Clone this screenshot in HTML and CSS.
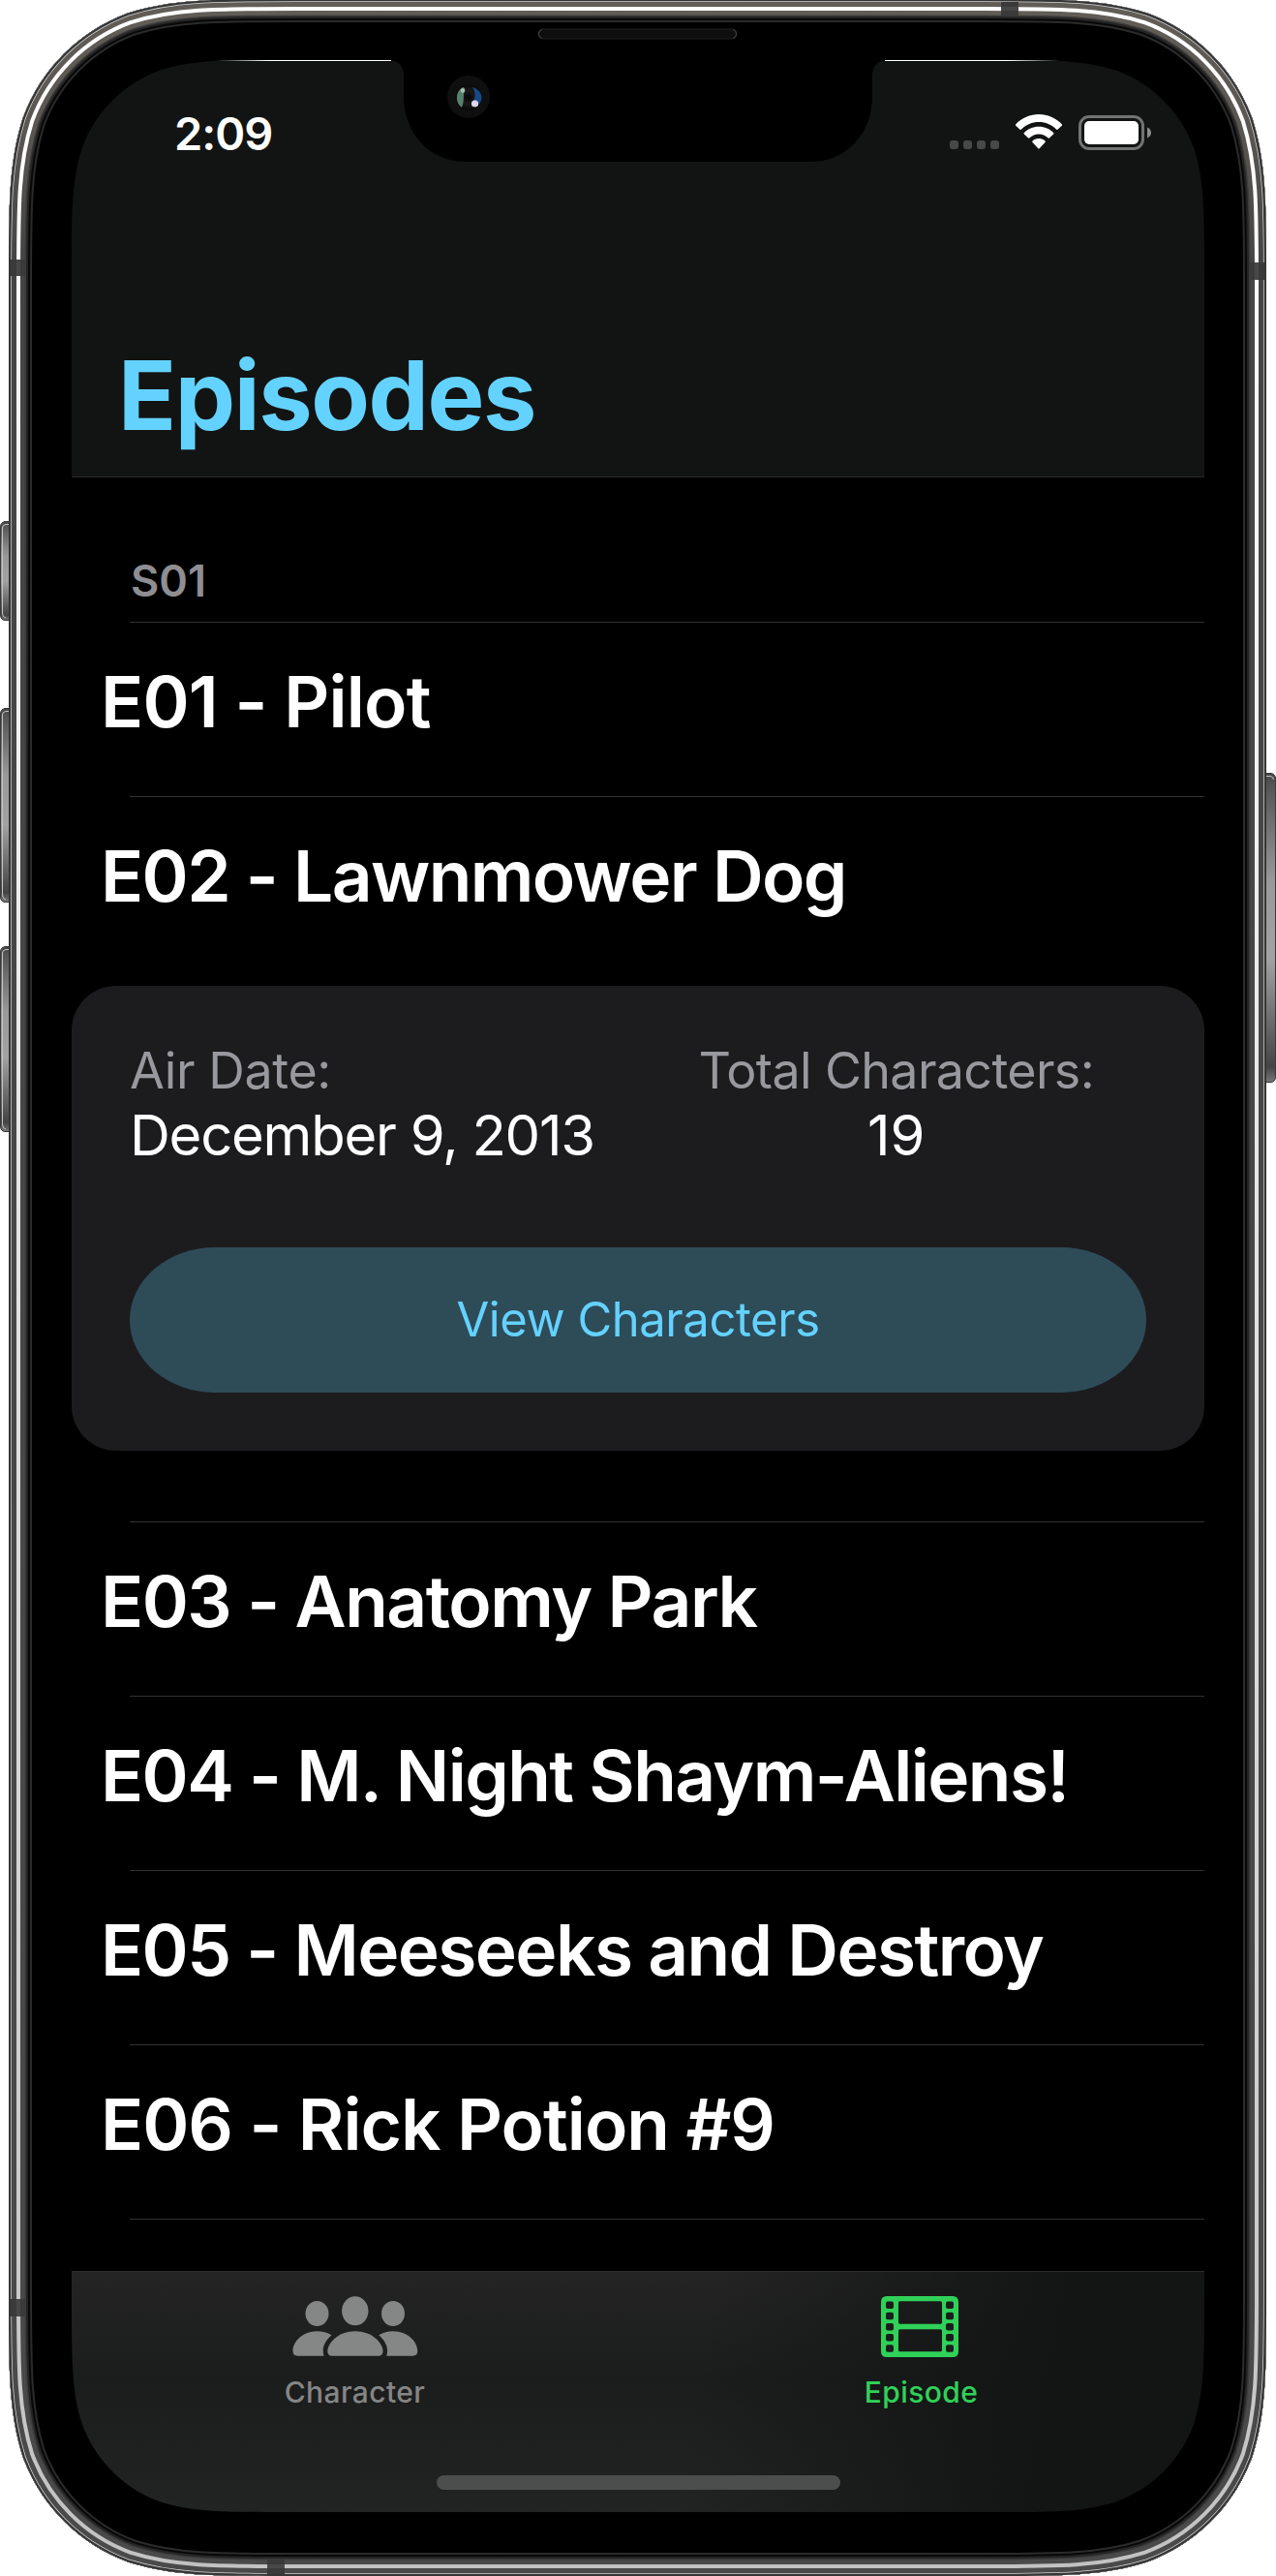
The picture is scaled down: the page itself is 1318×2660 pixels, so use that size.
FILE: index.html
```html
<!DOCTYPE html>
<html lang="en">
<head>
<meta charset="utf-8">
<title>Episodes</title>
<link rel="stylesheet" href="styles.css">
</head>
<body>
<div class="device">
  <main class="screen">
    <header class="nav">
      <div class="status">
        <span class="time">2:09</span>
        <div class="indicators">
          <span class="dots"><i></i><i></i><i></i><i></i></span>
          <svg class="wifi" viewBox="0 0 48 36" width="48" height="36" fill="#fff">
            <path d="M24 0C33 0 41.500 3.600 48 10.500Q48.300 11.200 47.800 11.800L43.500 15.800Q42.800 16.300 42 15.600C37 10.600 31 8 24 8S11 10.600 6 15.600Q5.200 16.300 4.500 15.800L.2 11.800Q-.3 11.200 0 10.500C6.500 3.600 15 0 24 0Z"/>
            <path d="M24 12.700C30 12.700 35.300 15 39.300 19.200Q39.700 19.900 39.200 20.500L34.900 24.500Q34.100 25 33.400 24.300C30.800 21.900 27.700 20.500 24 20.500S17.200 21.900 14.600 24.300Q13.900 25 13.100 24.500L8.800 20.500Q8.300 19.900 8.700 19.200C12.700 15 18 12.700 24 12.700Z"/>
            <path d="M24 25C26.700 25 29 26 30.700 27.800Q31 28.500 30.500 29.100L24.700 35.200Q24 35.800 23.300 35.200L17.500 29.100Q17 28.500 17.300 27.800C19 26 21.300 25 24 25Z"/>
          </svg>
          <svg class="battery" viewBox="0 0 76 36" width="76" height="36">
            <rect x="1.500" y="1.500" width="65" height="33" rx="9.500" fill="none" stroke="#717272" stroke-width="3"/>
            <rect x="6" y="6" width="56" height="24" rx="5" fill="#fff"/>
            <path d="M71 12.500C76.300 14.500 76.300 21.500 71 23.500Z" fill="#8a8b8a"/>
          </svg>
        </div>
      </div>
      <h1 class="title">Episodes</h1>
    </header>

    <section class="list">
      <h2 class="season">S01</h2>
      <div class="row r1">E01 - Pilot</div>
      <div class="row r2">E02 - Lawnmower Dog</div>
      <article class="card">
        <div class="facts">
          <div class="fact"><span class="label l1">Air Date:</span><span class="value v1">December 9, 2013</span></div>
          <div class="fact center"><span class="label l2">Total Characters:</span><span class="value">19</span></div>
        </div>
        <button class="view">View Characters</button>
      </article>
      <div class="row r3">E03 - Anatomy Park</div>
      <div class="row r4">E04 - M. Night Shaym-Aliens!</div>
      <div class="row r5">E05 - Meeseeks and Destroy</div>
      <div class="row r6">E06 - Rick Potion #9</div>
      <div class="row"></div>
    </section>

    <nav class="tabs">
      <div class="tab">
        <svg viewBox="0 0 130 63" width="130" height="63" fill="#858686">
          <ellipse cx="25.500" cy="18" rx="12" ry="13"/>
          <ellipse cx="104" cy="18" rx="12" ry="13"/>
          <ellipse cx="64.800" cy="15.300" rx="13.700" ry="15"/>
          <path d="M25.500 36.300C31 36.300 36 37.500 40.500 40.300C35.500 44.500 32 50 31.700 56Q31.600 59 32.600 61.700H5.500Q.5 61.700.5 56.500C.5 48 9.500 36.300 25.500 36.300Z"/>
          <path d="M104 36.300C98.500 36.300 94 37.500 89.300 40.300C94.300 44.500 97.800 50 98.100 56Q98.200 59 97.200 61.700H124.300Q129.300 61.700 129.300 56.500C129.300 48 120.300 36.300 104 36.300Z"/>
          <path d="M64.800 36.300C82.500 36.300 93.500 48.500 93.500 57Q93.500 61.700 88.500 61.700H41.300Q36.300 61.700 36.300 57C36.300 48.500 47.500 36.300 64.800 36.300Z"/>
        </svg>
        <span>Character</span>
      </div>
      <div class="tab active">
        <svg class="film" viewBox="0 0 80 63" width="80" height="63">
          <path fill="#30d158" fill-rule="evenodd" d="M6 0H74Q80 0 80 6V57Q80 63 74 63H6Q0 63 0 57V6Q0 0 6 0ZM19.500 5.300Q18 5.300 18 7V27Q18 28.700 19.500 28.700H61.500Q63 28.700 63 27V7Q63 5.300 61.500 5.300ZM19.500 34.300Q18 34.300 18 36V56Q18 57.300 19.500 57.300H61.500Q63 57.300 63 56V36Q63 34.300 61.500 34.300Z"/>
          <g fill="#1b1d1c">
            <rect x="5" y="5.500" width="8" height="7.500" rx="2"/><rect x="5" y="16.700" width="8" height="7.500" rx="2"/><rect x="5" y="27.900" width="8" height="7.500" rx="2"/><rect x="5" y="39" width="8" height="7.500" rx="2"/><rect x="5" y="50.200" width="8" height="7.500" rx="2"/>
            <rect x="67" y="5.500" width="8" height="7.500" rx="2"/><rect x="67" y="16.700" width="8" height="7.500" rx="2"/><rect x="67" y="27.900" width="8" height="7.500" rx="2"/><rect x="67" y="39" width="8" height="7.500" rx="2"/><rect x="67" y="50.200" width="8" height="7.500" rx="2"/>
          </g>
        </svg>
        <span>Episode</span>
      </div>
      <div class="home"></div>
    </nav>
  </main>

  <svg class="frame" viewBox="0 0 1318 2660" width="1318" height="2660">
    <defs>
      <path id="body" d="M307.100-1C221.300-1 178.300-1 132.100 13.600C81.700 32 42 71.700 23.600 122.100C9 168.300 9 211.300 9 297.100V2361.900C9 2447.700 9 2490.700 23.600 2536.900C42 2587.300 81.700 2627 132.100 2645.400C178.300 2660 221.300 2660 307.100 2660H1009.900C1095.700 2660 1138.700 2660 1184.900 2645.400C1235.300 2627 1275 2587.300 1293.400 2536.900C1308 2490.700 1308 2447.700 1308 2361.900V297.100C1308 211.300 1308 168.300 1293.400 122.100C1275 71.700 1235.300 32 1184.900 13.600C1138.700-1 1095.700-1 1009.900-1Z"/>
      <clipPath id="inside"><use href="#body"/></clipPath>
      <linearGradient id="metal" gradientUnits="userSpaceOnUse" x1="0" y1="0" x2="0" y2="2660">
        <stop offset="0" stop-color="#625d57"/><stop offset=".05" stop-color="#5a5651"/><stop offset=".1" stop-color="#454545"/><stop offset="1" stop-color="#4a4a4a"/>
      </linearGradient>
      <linearGradient id="shine" gradientUnits="userSpaceOnUse" x1="0" y1="0" x2="0" y2="2660">
        <stop offset="0" stop-color="#fff"/><stop offset=".3" stop-color="#f0f0f0"/><stop offset=".6" stop-color="#dcdcdc"/><stop offset="1" stop-color="#c2c2c2"/>
      </linearGradient>
      <linearGradient id="button" x1="0" y1="0" x2="0" y2="1">
        <stop offset="0" stop-color="#444"/><stop offset=".04" stop-color="#555"/><stop offset=".35" stop-color="#999"/><stop offset=".6" stop-color="#a2a2a2"/><stop offset=".95" stop-color="#444"/><stop offset="1" stop-color="#777"/>
      </linearGradient>
      <radialGradient id="iris"><stop offset="0" stop-color="#050505"/><stop offset=".5" stop-color="#1b1818"/><stop offset="1" stop-color="#080808"/></radialGradient>
      <linearGradient id="edgeL"><stop offset="0" stop-color="#fff" stop-opacity="0"/><stop offset=".3" stop-color="#fff"/></linearGradient>
      <linearGradient id="edgeR"><stop offset=".7" stop-color="#fff"/><stop offset="1" stop-color="#fff" stop-opacity="0"/></linearGradient>
    </defs>

    <g fill="url(#button)" stroke="#3a3a3a" stroke-width="1">
      <path d="M10 538.500H5Q.5 539.500.5 544V635Q.5 640 5 640.500H10Z"/>
      <path d="M10 731.500H5Q.5 732.500.5 737V926Q.5 931 5 931.500H10Z"/>
      <path d="M10 977.500H5Q.5 978.500.5 983V1163Q.5 1168 5 1168.500H10Z"/>
      <path d="M1307 798.500H1313Q1317.500 799.500 1317.500 804V1112Q1317.500 1117 1313 1117.500H1307Z"/>
    </g>
    <g fill="none" stroke="#c4c4c4" stroke-width="1">
      <path d="M9 541.500H6Q2.500 542 2.500 545V633Q2.500 637.500 6 638"/>
      <path d="M9 734.500H6Q2.500 735 2.500 738V924Q2.500 928.500 6 929"/>
      <path d="M9 980.500H6Q2.500 981 2.500 984V1161Q2.500 1165.500 6 1166"/>
      <path d="M1308 801.500H1312Q1315.500 802 1315.500 805"/>
    </g>

    <path fill-rule="evenodd" d="M307.100-1C221.300-1 178.300-1 132.100 13.600C81.700 32 42 71.700 23.600 122.100C9 168.300 9 211.300 9 297.100V2361.900C9 2447.700 9 2490.700 23.600 2536.900C42 2587.300 81.700 2627 132.100 2645.400C178.300 2660 221.300 2660 307.100 2660H1009.900C1095.700 2660 1138.700 2660 1184.900 2645.400C1235.300 2627 1275 2587.300 1293.400 2536.900C1308 2490.700 1308 2447.700 1308 2361.900V297.100C1308 211.300 1308 168.300 1293.400 122.100C1275 71.700 1235.300 32 1184.900 13.600C1138.700-1 1095.700-1 1009.900-1Z
      M294.100 62C230.700 62 199 62 164.900 72.800C127.700 86.300 98.300 115.700 84.800 152.900C74 187 74 218.700 74 282.100V2373.900C74 2437.300 74 2469 84.800 2503.100C98.300 2540.300 127.700 2569.700 164.900 2583.200C199 2594 230.700 2594 294.100 2594H1023.900C1087.300 2594 1119 2594 1153.100 2583.200C1190.300 2569.700 1219.700 2540.300 1233.200 2503.100C1244 2469 1244 2437.300 1244 2373.900V282.100C1244 218.700 1244 187 1233.200 152.900C1219.700 115.700 1190.300 86.300 1153.100 72.800C1119 62 1087.300 62 1023.900 62Z"/>
    <g clip-path="url(#inside)" fill="none">
      <use href="#body" stroke="#2b2b2b" stroke-width="48"/>
      <use href="#body" stroke="#080808" stroke-width="44"/>
      <use href="#body" stroke="#242424" stroke-width="40"/>
      <use href="#body" stroke="#3c3b3a" stroke-width="36"/>
      <use href="#body" stroke="url(#metal)" stroke-width="33"/>
      <use href="#body" stroke="url(#shine)" stroke-width="24"/>
      <use href="#body" stroke="url(#metal)" stroke-width="16"/>
      <use href="#body" stroke="#d4d6d6" stroke-width="6"/>
      <use href="#body" stroke="#363636" stroke-width="4.500"/>
    </g>
    <g fill="#3a3a3a">
      <path d="M11 268H27V285H11ZM1290 271H1306V289H1290ZM1034 2H1052V17H1034ZM11 2374H27V2392H11ZM276 2642H294V2658H276Z"/>
      <path fill="#484848" d="M17 268H21V285H17ZM1296 271H1300V289H1296ZM1034 7H1052V11H1034ZM17 2374H21V2392H17ZM276 2648H294V2652H276Z"/>
    </g>

    <path d="M403 62Q417 64 417 78V100C417 137 443 167 481 167H837C875 167 901 137 901 100V78Q901 64 915 62Z"/>
    <rect x="222" y="62" width="182" height="1" fill="url(#edgeL)"/>
    <rect x="914" y="62" width="182" height="1" fill="url(#edgeR)"/>
    <rect x="556" y="30" width="205" height="10" rx="5" fill="#0e0e0e" stroke="#202020"/>
    <path d="M560 30.500Q556.500 31 556.500 35T560 39.500M757 30.500Q760.500 31 760.500 35T757 39.500" fill="none" stroke="#444"/>
    <circle cx="484" cy="100" r="22" fill="#0f0f0f"/>
    <circle cx="484" cy="100.500" r="13.500" fill="url(#iris)"/>
    <path d="M478 90C470 94 470 107 477 111C480 104 478 98 480 91Z" fill="#55806c"/>
    <path d="M488 90C500 94 500 105 492 110L488 106C492 101 491 95 488 90Z" fill="#164a86"/>
    <circle cx="478" cy="93.500" r="2.300" fill="#a9bfb4"/>
    <circle cx="490.500" cy="107" r="3.600" fill="#dcd6ec"/>
  </svg>
</div>
</body>
</html>
```
FILE: styles.css
```css
* { box-sizing: border-box; }

body {
  margin: 0;
  background: #fff;
  font-family: Inter, "Liberation Sans", sans-serif;
  color: #fff;
}

.device {
  position: relative;
  width: 1318px;
  height: 2660px;
  padding: 62px 74px 66px;
  overflow: hidden;
}

.frame {
  position: absolute;
  inset: 0;
  pointer-events: none;
}

.screen {
  display: flex;
  flex-direction: column;
  width: 1170px;
  height: 2532px;
  background: #000;
}

.nav {
  display: flex;
  flex-direction: column;
  justify-content: space-between;
  height: 431px;
  padding: 56px 54px 24px 48px;
  background: #121413;
  border-bottom: 1px solid #2a2b2b;
}

.status {
  display: flex;
  justify-content: space-between;
  height: 40px;
  padding-left: 58px;
}

.time {
  font-size: 47px;
  font-weight: 600;
  line-height: 40px;
  letter-spacing: -1px;
}

.indicators {
  display: flex;
  align-items: flex-start;
}

.dots {
  display: flex;
  gap: 5px;
  margin: 27px 17px 0 0;
}

.dots i {
  width: 9px;
  height: 9px;
  border-radius: 3px;
  background: #474848;
}

.battery { margin: 1px 0 0 17px; }

.title {
  margin: 0;
  font-size: 99px;
  font-weight: 700;
  line-height: 120px;
  letter-spacing: -1.4px;
  color: #64d2ff;
}

.list {
  display: flex;
  flex-direction: column;
  height: 1852px;
  overflow: hidden;
}

.season {
  flex: none;
  margin: 0;
  padding: 84px 0 0 61px;
  height: 149px;
  font-size: 45px;
  font-weight: 600;
  line-height: 46px;
  color: #8e8e93;
}

.row {
  flex: none;
  height: 180px;
  padding-left: 30px;
  font-size: 73px;
  font-weight: 600;
  line-height: 166px;
  white-space: nowrap;
  font-feature-settings: "calt" 0;
  background: linear-gradient(#323234, #323234) 60px 0 / 100% 1px no-repeat;
}

.r1 { letter-spacing: -.8px; }
.r2 { letter-spacing: -1.6px; }
.r3 { letter-spacing: -1.5px; }
.r4 { letter-spacing: -1.6px; }
.r5 { letter-spacing: -1.6px; }
.r6 { letter-spacing: -1px; }

.card {
  flex: none;
  height: 480px;
  margin: 16px 0 73px;
  padding: 60px;
  border-radius: 46px;
  background: #1c1c1e;
}

.facts {
  display: flex;
  justify-content: space-between;
  padding-right: 54px;
}

.fact {
  display: flex;
  flex-direction: column;
}

.center { align-items: center; }

.label {
  font-size: 52px;
  line-height: 56px;
  color: #98989f;
}

.l1 { letter-spacing: -.4px; }
.l2 { letter-spacing: -.65px; }

.value {
  font-size: 58px;
  line-height: 76px;
}

.v1 { letter-spacing: -1.25px; }

.view {
  display: block;
  width: 100%;
  height: 150px;
  margin-top: 78px;
  padding: 0;
  border: 0;
  border-radius: 88px / 75px;
  background: #2e4b58;
  color: #64d2ff;
  font: 400 49px/150px Inter, "Liberation Sans", sans-serif;
  letter-spacing: -.45px;
}

.tabs {
  display: grid;
  grid-template-columns: 1fr 1fr;
  grid-template-rows: 205px 1fr;
  height: 249px;
  border-top: 1px solid #2c2c2c;
  background:
    linear-gradient(100deg, transparent 55%, #131414 85%),
    linear-gradient(#232423, #1b1c1c 45%, #222323);
}

.tab {
  display: flex;
  flex-direction: column;
  align-items: center;
  padding-top: 25px;
  font-size: 30px;
  font-weight: 500;
  line-height: 36px;
  letter-spacing: .4px;
  color: #858686;
}

.tab span { margin-top: 18px; }

.film { margin-left: -3px; }

.active { color: #30d158; }

.home {
  grid-column: 1 / -1;
  justify-self: center;
  width: 417px;
  height: 15px;
  margin-top: 5px;
  border-radius: 8px;
  background: #4c4d4d;
}
```
